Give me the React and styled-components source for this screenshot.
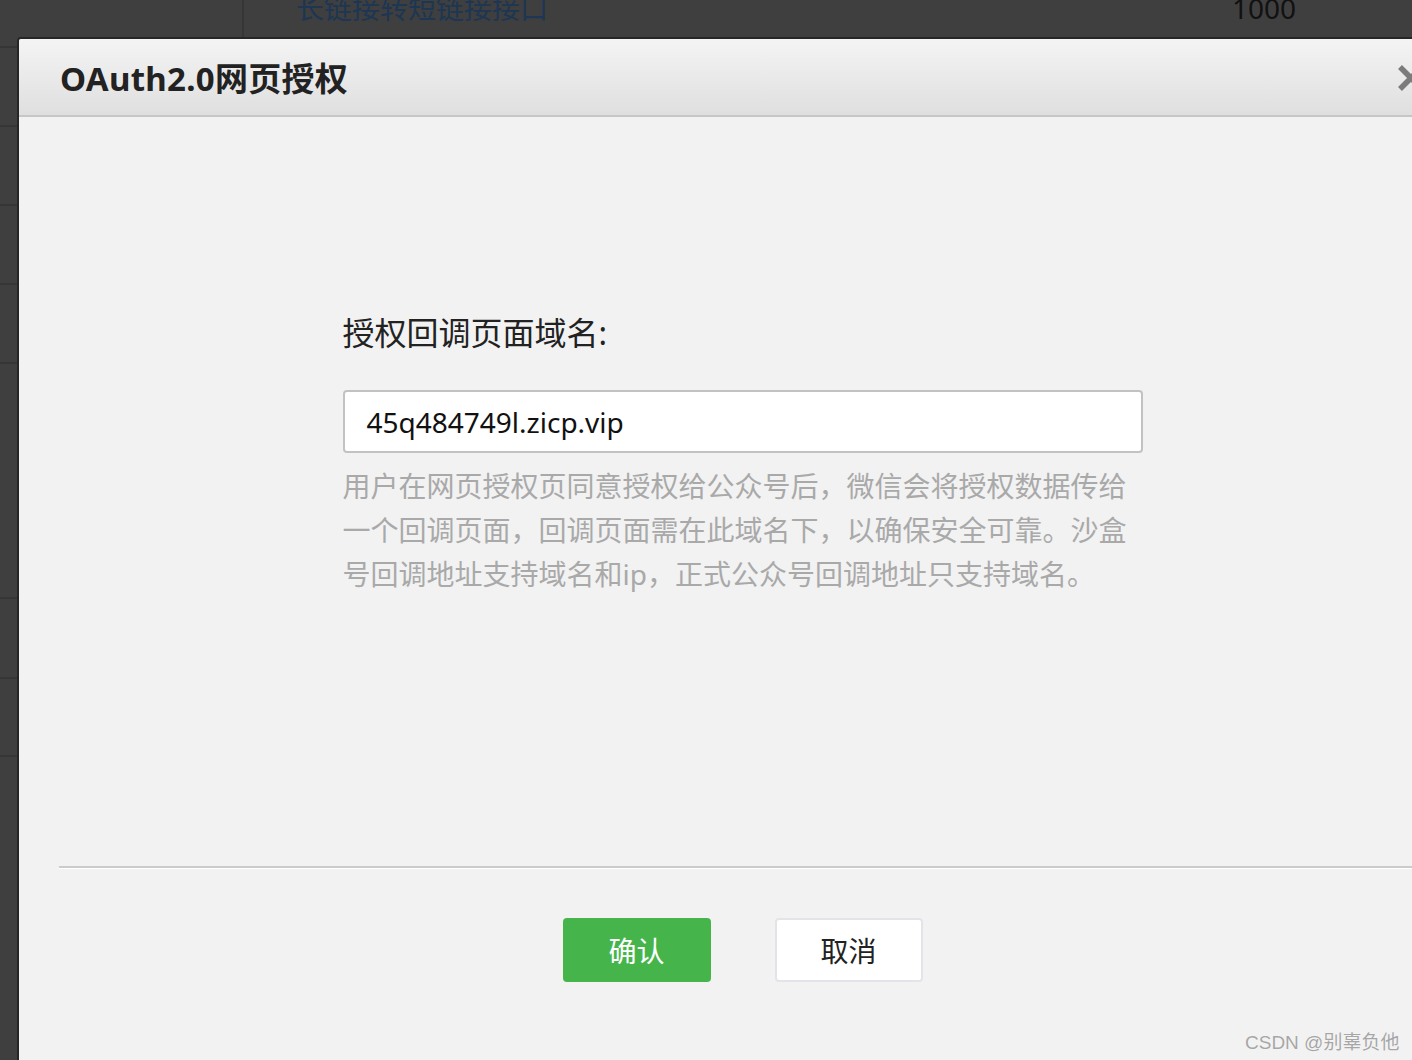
import React from 'react';
import styled, { createGlobalStyle } from 'styled-components';

const GlobalStyle = createGlobalStyle`
  html, body {
    margin: 0;
    padding: 0;
    background: #3f3f3f;
  }
  body {
    font-family: "Noto Sans", "Noto Sans CJK SC", sans-serif;
  }
`;

const Page = styled.div`
  position: relative;
  width: 1412px;
  height: 1060px;
  overflow: hidden;
  background: #3f3f3f;
`;

const Table = styled.div`
  display: flex;
  flex-direction: column;
`;

const Row = styled.div`
  display: flex;
  height: ${props => props.$h}px;
  border-bottom: 2px solid #363636;
  box-sizing: border-box;
`;

const NameCell = styled.div`
  width: 244px;
  border-right: 2px solid #363636;
  box-sizing: border-box;
`;

const TextCell = styled.div`
  flex: 1;
  display: flex;
  align-items: flex-start;
  justify-content: space-between;
  padding: 0 116px 0 52px;
  margin-top: -10px;
  font-size: 28px;
  line-height: 36px;
`;

const LinkText = styled.span`
  color: #1d3653;
`;

const Count = styled.span`
  color: #111;
`;

const Dialog = styled.div`
  position: absolute;
  left: 17px;
  top: 37px;
  width: 1451px;
  height: 1060px;
  box-sizing: border-box;
  border: 2px solid #262626;
  border-radius: 4px 4px 0 0;
  background: #f2f2f2;
  display: flex;
  flex-direction: column;
`;

const Header = styled.div`
  position: relative;
  height: 78px;
  box-sizing: border-box;
  display: flex;
  align-items: center;
  padding-left: 41px;
  background: linear-gradient(to bottom, #f4f4f4, #dfdfdf);
  border-bottom: 2px solid #c6c6c6;
  border-radius: 3px 3px 0 0;
`;

const Title = styled.h1`
  margin: 0;
  font-size: 33px;
  font-weight: 700;
  color: #222;
  letter-spacing: 0.3px;
`;

const Close = styled.div`
  position: absolute;
  right: 40px;
  top: 24px;
  width: 30px;
  height: 30px;
`;

const Body = styled.div`
  height: 749px;
  box-sizing: border-box;
  padding-top: 196px;
  display: flex;
  justify-content: center;
`;

const Form = styled.div`
  width: 800px;
  display: flex;
  flex-direction: column;
`;

const Label = styled.div`
  font-size: 32px;
  line-height: 40px;
  color: #222;
  margin-bottom: 37px;
`;

const Input = styled.div`
  height: 63px;
  box-sizing: border-box;
  border: 2px solid #c2c2c2;
  border-radius: 4px;
  background: #fff;
  display: flex;
  align-items: center;
  padding-left: 22px;
  font-size: 28px;
  color: #111;
`;

const Help = styled.p`
  margin: 11px 0 0;
  font-size: 28px;
  line-height: 44px;
  color: #a9a9a9;
  width: 790px;
`;

const Footer = styled.div`
  margin-left: 40px;
  border-top: 2px solid #cbcbcb;
  box-shadow: inset 0 1px 0 #fff;
  padding-top: 50px;
  display: flex;
  justify-content: center;
  gap: 64px;
  padding-right: 40px;
`;

const Button = styled.button`
  width: 148px;
  height: 64px;
  box-sizing: border-box;
  border-radius: 4px;
  font-family: "Noto Sans CJK SC", sans-serif;
  font-size: 28px;
  cursor: pointer;
  border: ${props => props.$primary ? 'none' : '2px solid #e3e3ea'};
  background: ${props => props.$primary ? '#45b54b' : '#fff'};
  color: ${props => props.$primary ? '#fff' : '#222'};
`;

const Watermark = styled.div`
  position: absolute;
  left: 1245px;
  top: 1027px;
  font-family: "Liberation Sans", "Noto Sans CJK SC", sans-serif;
  font-size: 19px;
  color: #a6a6a6;
  text-shadow: 0 0 1px #fff;
`;

const rows = [48, 79, 79, 79, 79, 235, 80, 78, 400];

const App = () => (
  <Page>
    <GlobalStyle />
    <Table>
      {rows.map((h, i) => (
        <Row key={i} $h={h}>
          <NameCell />
          {i === 0 && (
            <TextCell>
              <LinkText>长链接转短链接接口</LinkText>
              <Count>1000</Count>
            </TextCell>
          )}
        </Row>
      ))}
    </Table>
    <Dialog>
      <Header>
        <Title>OAuth2.0网页授权</Title>
        <Close>
          <svg width="30" height="30" viewBox="0 0 30 30">
            <path d="M4 4 L26 26 M26 4 L4 26" stroke="#7b7b7b" strokeWidth="5.5" />
          </svg>
        </Close>
      </Header>
      <Body>
        <Form>
          <Label>授权回调页面域名:</Label>
          <Input>45q484749l.zicp.vip</Input>
          <Help>
            用户在网页授权页同意授权给公众号后，微信会将授权数据传给一个回调页面，回调页面需在此域名下，以确保安全可靠。沙盒号回调地址支持域名和ip，正式公众号回调地址只支持域名。
          </Help>
        </Form>
      </Body>
      <Footer>
        <Button $primary>确认</Button>
        <Button>取消</Button>
      </Footer>
    </Dialog>
    <Watermark>CSDN @别辜负他</Watermark>
  </Page>
);

export default App;
